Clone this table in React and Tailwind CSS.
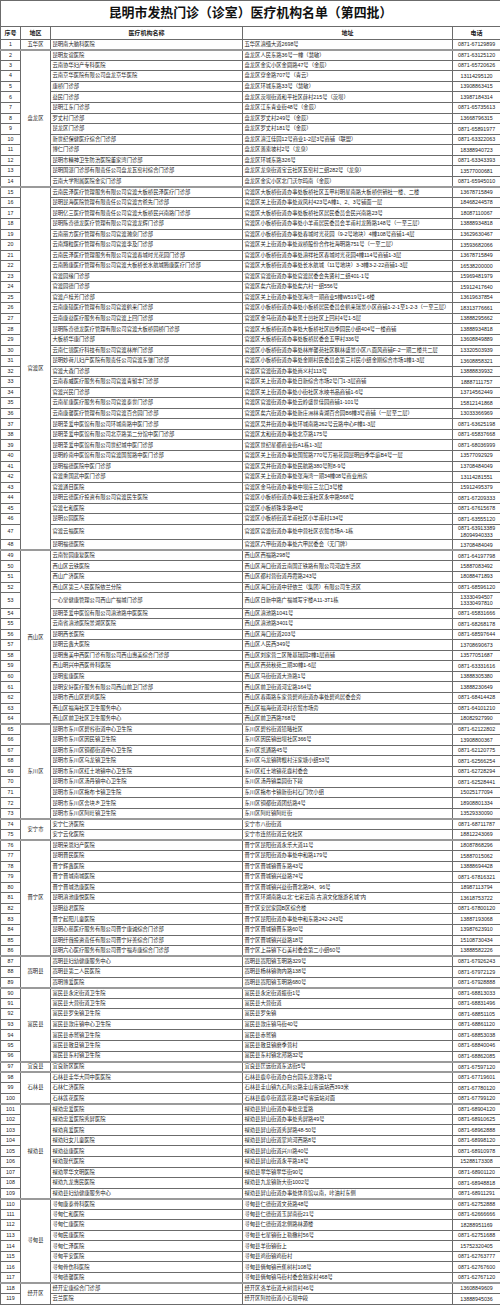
import React from "react";

const groups = [
  ["五华区", [
    ["昆明南大脑科医院", "五华区滇缅大道2698号", "0871-67129899"],
  ]],
  ["盘龙区", [
    ["昆明友谊医院", "盘龙区人民东路36号一幢（慧敏）", "0871-63125120"],
    ["云南协华妇产专科医院", "盘龙区金实小区金圆路47号（金辰）", "0871-65720626"],
    ["云南京华医院有限公司盘龙京华医院", "盘龙区穿金路707号（青云）", "13114295120"],
    ["康桥门诊部", "盘龙区环城东路33号（慧敏）", "13908863415"],
    ["益民门诊部", "盘龙区茨坝街道和平社区薛村215号（茨坝）", "13987184314"],
    ["昆明江东门诊部", "盘龙区江东青业街48号（金辰）", "0871-65735613"],
    ["罗丈村门诊部", "盘龙区罗丈村249号（金辰）", "13668796315"],
    ["昆龙区门诊部", "盘龙区罗丈村181号（金辰）", "0871-65891977"],
    ["新世纪保健医疗综合门诊部", "盘龙区滇江佳园12号商业1-2层3号商铺（联盟）", "0871-63322063"],
    ["博仁门诊部", "盘龙区落索坡村2号（龙泉）", "18388940723"],
    ["昆明市精神卫生防治医院董家湾门诊部", "盘龙区环城东路326号", "0871-63343393"],
    ["昆明国湛门诊部有限责任公司盘龙瓦窑村综合门诊部", "盘龙区龙泉街道宝云社区瓦窑村二组282号（龙泉）", "13577000681"],
    ["云南大学附属医院金实门诊部", "盘龙区金实小区北门沃尔玛南（金辰）", "0871-65945010"],
  ]],
  ["官渡区", [
    ["云南民泽医疗管理服务有限公司官渡大板桥民泽医疗门诊部", "官渡区大板桥街道办事处板桥社区五甲村明星南路大板桥供销社一楼、二楼", "13678715849"],
    ["昆明昆海医院管理有限责任公司官渡吉爸先门诊部", "官渡区关上街道办事处双凤村423号A幢1、2、3号铺面一层", "18468244578"],
    ["昆明亿三医疗管理有限责任公司官渡大板桥民兴南路门诊部", "官渡区大板桥街道办事处板桥社区居民委员会民兴南路23号", "18087110067"],
    ["昆明陈奇德龙医疗管理有限公司官渡龙辉门诊部", "官渡区小板桥街道办事处小羊甫居民委员会羊甫村龙腾路148号（一至三层）", "13888934818"],
    ["云南丽方医疗管理有限公司官渡瀚泉门诊部", "官渡区小板桥街道办事处春城时光花园（9-2号地块）4幢108号商铺1-4层", "13629630467"],
    ["云南翔粒医疗管理有限公司官渡李及门诊部", "官渡区关上街道办事处双桥股份合作社海明路751号（一至二层）", "13593682066"],
    ["云南民泽医疗管理服务有限公司官渡春城时光花园门诊部", "官渡区小板桥街道办事处滇祥社区春城时光花园4幢114号商铺1-3层", "13678715849"],
    ["云南腾康医疗管理有限公司官渡大板桥长水航城腾康医疗门诊部", "官渡区大板桥街道办事处长水航城（11号地块）3-3幢3-2-22商铺1-3层", "16538200000"],
    ["官渡园缘门诊部", "官渡区官渡街道办事处官渡居委会先贤村二组401-1号", "15969481979"],
    ["官渡园德门诊部", "官渡区矣六街道办事处矣六村一组556号", "15912417640"],
    ["官渡卢桂芳门诊部", "官渡区关上街道办事处张海湾一期商业5幢W519号1-6楼", "13619637854"],
    ["云南康硕医疗管理有限公司官渡鹤来门诊部", "官渡区小板桥街道办事处小板桥居民委员会鹤来瑞景小区商铺1-2-1至1-2-3（一至三层）", "18313776661"],
    ["云南康益医疗服务有限公司官渡上回门诊部", "官渡区金马街道办事处黑土凹社区上回村4号1-5层", "13888295662"],
    ["昆明陈奇德龙医疗管理有限公司官渡大板桥园桥门诊部", "官渡区大板桥街道办事处大板桥社区四季园民小组404号一楼商铺", "13888934818"],
    ["大板桥华康门诊部", "官渡区大板桥街道办事处板桥居委会五甲村336号", "13608849889"],
    ["云南仁锦医疗科技有限公司官渡林岸门诊部", "官渡区小板桥街道办事处林岸馨苑社区枫林盛景小区八面风商铺F-2一期二楼共二层", "13320503939"],
    ["昆明妙荷儿妇产医院有限责任公司官渡东骧门诊部", "官渡区小板桥街道办事处金刚村民委员会第三村民小组金刚综合市场1幢1-3层", "13608858321"],
    ["官渡大森门诊部", "官渡区官渡街道办事处尚义村113号", "13888839932"],
    ["云南春威医疗服务有限公司官渡青留丰门诊部", "官渡区关上街道办事处日新综合市场2号门1-3层商铺", "18887111757"],
    ["官渡兴民门诊部", "官渡区关上街道办事处小街社区水映书品商铺1-6号", "13714562449"],
    ["云南星康医疗服务有限公司官渡泰世门诊部", "官渡区官渡街道办事处云岭盛世佳园商铺1-101号", "15812141868"],
    ["云南康馨医疗管理有限公司官渡百合园门诊部", "官渡区矣六街道办事处新庄洲林青湖百合园B6幢3号商铺（一层至二层）", "13033366969"],
    ["昆明圣爱中医馆有限公司环城南路中医门诊部", "官渡区吴井街道办事处环城南路262号云路中心F幢1-3层", "0871-63625198"],
    ["昆明圣爱中医馆有限公司北京路第二分馆中医门诊部", "官渡区太和街道办事处北京路175号", "0871-65837668"],
    ["昆明圣爱中医馆有限公司世纪城中医门诊部", "官渡区世纪星都商业街A1栋1-3层", "0871-68036999"],
    ["昆明岭南中医馆有限公司官渡国贸路中医门诊部", "官渡区关上街道办事处国贸路770号万裕花园昆明四季华庭B4号一层", "13577092929"],
    ["昆明福德医院中医门诊部", "官渡区吴井街道办事处民航路380号附8-9号", "13708484049"],
    ["官渡熏国武中医门诊部", "官渡区关上街道办事处张海湾一期34幢08号商业用房", "13114281551"],
    ["官渡通目医院", "官渡区金马街道办事处中坝庄三岔口3号楼", "15912495379"],
    ["昆明云德医疗投资有限公司官渡民生医院", "官渡区小板桥街道办事处云溪社区永中路568号", "0871-67209333"],
    ["官渡七和医院", "官渡区小板桥珠李路48号", "0871-67615678"],
    ["昆明公园医院", "官渡区小板桥街道羊甫社区小羊甫村134号", "0871-63555120"],
    ["官渡云福医院", "官渡区官渡街道办事处中营社区农贸市场A-1栋", "0871-63913389\n18094940333"],
    ["昆明福德医院", "官渡区六甲街道办事处六甲居委会（无门牌）", "13708484049"],
  ]],
  ["西山区", [
    ["云南智园康复医院", "西山区西福路298号", "0871-64197798"],
    ["西山区云铁医院", "西山区海口街道云南国正铁路有限公司河边生活区", "15887083492"],
    ["西山广济医院", "西山区都村营街道丹霞路243号", "18088471893"],
    ["西山区第三人民医院依兰分院", "西山区海口街道中轻依兰（集团）有限公司生活区", "0871-68596120"],
    ["一心堂健康管理公司西山广福城门诊部", "西山区日新中路广福城写字楼A11-3T1栋", "13330494507\n13330497810"],
    ["昆明圣爱中医馆有限公司滇池路中医医院", "西山区滇池路1041号", "0871-65831666"],
    ["云南省滇池医院景湖区医院", "西山区滇池路3401号", "0871-68268178"],
    ["昆明西长医院", "西山区海口街道203号", "0871-68597644"],
    ["昆明云鑫大医院", "西山区人民西349号", "13708690673"],
    ["昆明惠美中西医门诊有限公司西山惠美综合门诊部", "西山区刘家营二区隆基瑞园2幢1层商铺", "13577051687"],
    ["西山明兴中西医骨科医院", "西山区西苑秋苑二期30幢1-6层", "0871-63331616"],
    ["昆明蜜康医院", "西山区马街街道大渔路1号", "13888305380"],
    ["昆明安好医疗服务有限公司西山前卫门诊部", "西山区前卫街道河宏路164号", "13888230649"],
    ["昆明市西山区碧鸡医院", "西山区春雨路东家营碧鸡街道办事处碧鸡居委会旁", "0871-68414428"],
    ["西山区福海社区卫生服务中心", "西山区福海街道河村农贸市场旁", "0871-64101210"],
    ["西山区前卫社区卫生服务中心", "西山区前卫西路768号", "18082927990"],
  ]],
  ["东川区", [
    ["昆明市东川区碧谷街道中心卫生院", "东川区碧谷街道铅曦社区", "0871-62122802"],
    ["昆明市东川区因民镇卫生院", "东川区因民镇田坝社区366号", "13908800367"],
    ["昆明市东川区铜都街道中心卫生院", "东川区凯通路45号", "0871-62120775"],
    ["昆明市东川区乌龙镇卫生院", "东川区乌龙镇碑根村汪家塘小组53号", "0871-62566254"],
    ["昆明市东川区红土地镇中心卫生院", "东川区红土地镇花鹿村委会", "0871-62728294"],
    ["昆明市东川区汤丹镇中心卫生院", "东川区汤丹镇菜园街下段", "0871-62528441"],
    ["昆明市东川区拖布卡镇卫生院", "东川区拖布卡镇新街村石门坎小组", "15025177094"],
    ["昆明市东川区舍块乡卫生院", "东川区铜都街道团结路4号", "18908801334"],
    ["昆明市东川区阿旺镇卫生院", "东川区阿旺镇阿旺街", "13529330090"],
  ]],
  ["安宁市", [
    ["安宁仁济医院", "安宁市八街街道", "0871-68711787"],
    ["安宁云化医院", "安宁市连然街道云化社区", "18812243069"],
  ]],
  ["晋宁区", [
    ["昆明荣恩妇产医院", "晋宁区昆阳街道永乐大道11号", "18087868296"],
    ["昆明晋民医院", "晋宁区昆阳街道办事处中和路179号", "15887015062"],
    ["晋宁辉鑫医院", "晋宁区晋城镇晋东路43号", "13888694428"],
    ["晋宁晋城南城医院", "晋宁区晋城镇兴益路74号", "0871-67816321"],
    ["晋宁晋城浩康医院", "晋宁区晋城镇兴益街晋北路94、96号", "18987113794"],
    ["昆明滇池康悦医院", "晋宁区环湖南路以北“七彩云南.古滇文化旅游名城”内", "13618753722"],
    ["昆明益君医院", "晋宁区安居家园B区综合楼", "0871-67800120"],
    ["晋宁起阳儿童医院", "晋宁区昆阳街道办事处中和东路242-243号", "13887193068"],
    ["昆明心慈医疗服务有限公司晋宁康诚综合门诊部", "晋宁区晋城镇晋东路60号", "13987623910"],
    ["昆明纤薇投资责任有限公司晋宁好善综合门诊部", "晋宁区晋城镇兴益路18号", "15108730434"],
    ["昆明六心医疗服务有限公司晋宁福寿康综合门诊部", "晋宁区上蒜镇下石美村委会第二小组60号", "13888582226"],
  ]],
  ["嵩明县", [
    ["嵩明县妇幼健康服务中心", "嵩明县嵩阳镇玉明路329号", "0871-67926243"],
    ["嵩明县第二人民医院", "嵩明县杨林镇驹内路138号", "0871-67972129"],
    ["嵩明博爱医院", "嵩明县嵩阳镇玉明路680号", "0871-67928888"],
  ]],
  ["富民县", [
    ["富民县永定街道卫生院", "富民县永定街道振街1号", "0871-68813033"],
    ["富民县大营街道卫生院", "富民县大营街道", "0871-68831496"],
    ["富民县罗免镇卫生院", "富民县罗免镇", "0871-68851105"],
    ["富民县款庄镇中心卫生院", "富民县款庄镇马街40号", "0871-68861120"],
    ["富民县赤鹫镇卫生院", "富民县赤鹫镇", "0871-68853038"],
    ["富民县散旦镇卫生院", "富民县散旦镇磨季营村", "0871-68840046"],
    ["富民县东村镇卫生院", "富民县东村镇北邦路32号", "0871-68862085"],
  ]],
  ["宜良县", [
    ["宜良新区医院", "宜良县匡远街道东达街5号", "0871-67597120"],
  ]],
  ["石林县", [
    ["石林县圭华大同中医医院", "石林县鹿阜街道办白台园东龙潭路1号", "0871-67719601"],
    ["石林仁济医院", "石林县圭山镇九石阿公路圭山客运站西393米", "0871-67780120"],
    ["石林莲花医院", "石林县鹿阜街道莲花路18号客运站对面", "0871-67799120"],
  ]],
  ["禄劝县", [
    ["禄劝忠爱医院", "禄劝县屏山街道办事处忠爱路", "0871-68904120"],
    ["禄劝忠爱医院秀屏医院", "禄劝县屏山街道办事处秀屏路49号", "0871-68910625"],
    ["禄劝真爱医院", "禄劝县屏山街道秀屏路48-50号", "0871-68962888"],
    ["禄劝妇女儿童医院", "禄劝县屏山街道掌鸠河西路8号", "0871-68998120"],
    ["禄劝益康医院", "禄劝县屏山街道兴川路40号", "0871-68910978"],
    ["禄劝现代医院", "禄劝县屏山街道永平路18号", "15288173308"],
    ["禄劝翠华文明医院", "禄劝县翠华镇翠华街90号", "0871-68901120"],
    ["禄劝九龙惠民医院", "禄劝县九龙镇新大街1002号", "0871-68948818"],
    ["禄劝县妇幼健康服务中心", "禄劝县屏山街道办事处体育馆以南，咔油村东侧", "0871-68911291"],
  ]],
  ["寻甸县", [
    ["寻甸康泰骨科医院", "寻甸县仁德街道文苑路48号", "0871-62752888"],
    ["寻甸仁和医院", "寻甸县仁德街道玉屏南街21号", "0871-62666666"],
    ["寻甸仁康医院", "寻甸县仁德街道北侧路林源楼", "18288951169"],
    ["寻甸民康医院", "寻甸县七星镇街上勒撒村56号", "0871-62751688"],
    ["寻甸仁泽医院", "寻甸县羊街镇街上", "15752320405"],
    ["寻甸平安医院", "寻甸县鸡街镇鸡街村", "0871-62763777"],
    ["寻甸骨伤科医院", "寻甸县倘甸镇芭蕉树村108号", "0871-62767600"],
    ["寻甸德馨医院", "寻甸县倘甸镇马街村委会独家村468号", "0871-62767120"],
  ]],
  ["经开区", [
    ["经开宏康综合门诊部", "经开区洛羊街道大树营村46号", "13608849609"],
    ["云兰医院", "经开区阿拉街道小石坝中段", "13888945036"],
  ]],
];

const font = { fontFamily: '"Liberation Sans", "Noto Sans CJK SC", sans-serif' };

export default function App() {
  let n = 0;
  const rows = [];
  groups.forEach(([region, items], gi) => {
    items.forEach((it, i) => {
      n += 1;
      const dbl = it[2].includes("\n");
      const top = i === 0 && gi > 0 ? "border-t-[2px] border-t-[#9a9a9a]" : "";
      rows.push(
        <tr key={n} className={dbl ? "h-[15.5px]" : "h-[10.55px]"}>
          <td className={`border border-[#6b6b6b] text-center p-0 ${top}`}>{n}</td>
          {i === 0 && (
            <td rowSpan={items.length} className={`border border-[#6b6b6b] text-center p-0 ${top}`}>
              {region}
            </td>
          )}
          <td className={`border border-[#6b6b6b] text-left pl-[1.5px] p-0 whitespace-nowrap overflow-hidden ${top}`}>{it[0]}</td>
          <td className={`border border-[#6b6b6b] text-left pl-[1.5px] p-0 whitespace-nowrap overflow-hidden ${top}`}>{it[1]}</td>
          <td className={`border border-[#6b6b6b] text-center p-0 whitespace-pre leading-[1.25] ${top}`}>{it[2]}</td>
        </tr>
      );
    });
  });

  return (
    <div className="w-[500px] bg-white text-[#222]" style={font}>
      <table className="w-[500px] table-fixed border-collapse text-[5.3px] leading-none">
        <colgroup>
          <col className="w-[20px]" />
          <col className="w-[30px]" />
          <col className="w-[192px]" />
          <col className="w-[210px]" />
          <col className="w-[48px]" />
        </colgroup>
        <thead>
          <tr className="h-[26px]">
            <th colSpan={5} className="border border-[#6b6b6b] p-0 text-[12.9px] font-bold text-[#111] tracking-normal">
              昆明市发热门诊（诊室）医疗机构名单（第四批）
            </th>
          </tr>
          <tr className="h-[12.7px] text-[6px] font-bold">
            <th className="border border-[#6b6b6b] p-0">序号</th>
            <th className="border border-[#6b6b6b] p-0">地区</th>
            <th className="border border-[#6b6b6b] p-0">医疗机构名称</th>
            <th className="border border-[#6b6b6b] p-0">地址</th>
            <th className="border border-[#6b6b6b] p-0">电话</th>
          </tr>
        </thead>
        <tbody>{rows}</tbody>
      </table>
    </div>
  );
}
